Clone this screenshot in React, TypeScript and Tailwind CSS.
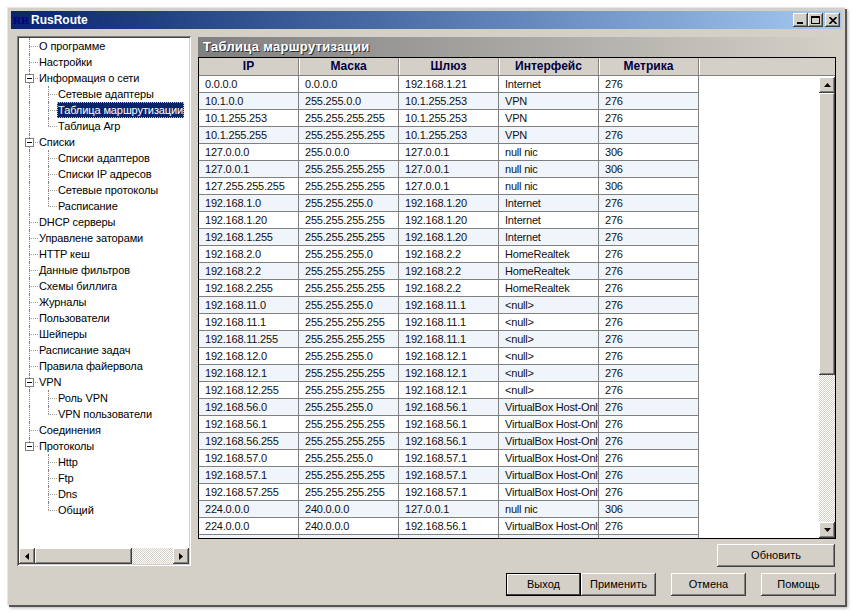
import React from 'react';

const FONT = "font-['Liberation_Sans',sans-serif]";
const RAISED = 'shadow-[inset_-1px_-1px_#404040,inset_1px_1px_#ffffff,inset_-2px_-2px_#808080]';
const DITHER = 'bg-[repeating-conic-gradient(#d4d0c8_0_25%,#ffffff_0_50%)] bg-size-[2px_2px]';

type TreeItem = { label: string; level: 0 | 1; box?: boolean; last?: boolean; endRoot?: boolean; selected?: boolean };

const tree: TreeItem[] = [
  { label: 'О программе', level: 0 },
  { label: 'Настройки', level: 0 },
  { label: 'Информация о сети', level: 0, box: true },
  { label: 'Сетевые адаптеры', level: 1 },
  { label: 'Таблица маршрутизации', level: 1, selected: true },
  { label: 'Таблица Arp', level: 1, last: true },
  { label: 'Списки', level: 0, box: true },
  { label: 'Списки адаптеров', level: 1 },
  { label: 'Списки IP адресов', level: 1 },
  { label: 'Сетевые протоколы', level: 1 },
  { label: 'Расписание', level: 1, last: true },
  { label: 'DHCP серверы', level: 0 },
  { label: 'Управлене заторами', level: 0 },
  { label: 'HTTP кеш', level: 0 },
  { label: 'Данные фильтров', level: 0 },
  { label: 'Схемы биллига', level: 0 },
  { label: 'Журналы', level: 0 },
  { label: 'Пользователи', level: 0 },
  { label: 'Шейперы', level: 0 },
  { label: 'Расписание задач', level: 0 },
  { label: 'Правила файервола', level: 0 },
  { label: 'VPN', level: 0, box: true },
  { label: 'Роль VPN', level: 1 },
  { label: 'VPN пользователи', level: 1, last: true },
  { label: 'Соединения', level: 0 },
  { label: 'Протоколы', level: 0, box: true, endRoot: true },
  { label: 'Http', level: 1 },
  { label: 'Ftp', level: 1 },
  { label: 'Dns', level: 1 },
  { label: 'Общий', level: 1, last: true },
];

const VBOX = 'VirtualBox Host-Only';
const M32 = '255.255.255.255';
const M24 = '255.255.255.0';

const routes: [string, string, string, string, string][] = [
  ['0.0.0.0', '0.0.0.0', '192.168.1.21', 'Internet', '276'],
  ['10.1.0.0', '255.255.0.0', '10.1.255.253', 'VPN', '276'],
  ['10.1.255.253', M32, '10.1.255.253', 'VPN', '276'],
  ['10.1.255.255', M32, '10.1.255.253', 'VPN', '276'],
  ['127.0.0.0', '255.0.0.0', '127.0.0.1', 'null nic', '306'],
  ['127.0.0.1', M32, '127.0.0.1', 'null nic', '306'],
  ['127.255.255.255', M32, '127.0.0.1', 'null nic', '306'],
  ['192.168.1.0', M24, '192.168.1.20', 'Internet', '276'],
  ['192.168.1.20', M32, '192.168.1.20', 'Internet', '276'],
  ['192.168.1.255', M32, '192.168.1.20', 'Internet', '276'],
  ['192.168.2.0', M24, '192.168.2.2', 'HomeRealtek', '276'],
  ['192.168.2.2', M32, '192.168.2.2', 'HomeRealtek', '276'],
  ['192.168.2.255', M32, '192.168.2.2', 'HomeRealtek', '276'],
  ['192.168.11.0', M24, '192.168.11.1', '<null>', '276'],
  ['192.168.11.1', M32, '192.168.11.1', '<null>', '276'],
  ['192.168.11.255', M32, '192.168.11.1', '<null>', '276'],
  ['192.168.12.0', M24, '192.168.12.1', '<null>', '276'],
  ['192.168.12.1', M32, '192.168.12.1', '<null>', '276'],
  ['192.168.12.255', M32, '192.168.12.1', '<null>', '276'],
  ['192.168.56.0', M24, '192.168.56.1', VBOX, '276'],
  ['192.168.56.1', M32, '192.168.56.1', VBOX, '276'],
  ['192.168.56.255', M32, '192.168.56.1', VBOX, '276'],
  ['192.168.57.0', M24, '192.168.57.1', VBOX, '276'],
  ['192.168.57.1', M32, '192.168.57.1', VBOX, '276'],
  ['192.168.57.255', M32, '192.168.57.1', VBOX, '276'],
  ['224.0.0.0', '240.0.0.0', '127.0.0.1', 'null nic', '306'],
  ['224.0.0.0', '240.0.0.0', '192.168.56.1', VBOX, '276'],
  ['', '', '', '', ''],
];

const headers = ['IP', 'Маска', 'Шлюз', 'Интерфейс', 'Метрика'];

const Arrow: React.FC<{ dir: 'up' | 'down' | 'left' | 'right' }> = ({ dir }) => {
  const points = {
    up: '0,4 7,4 3.5,0',
    down: '0,0 7,0 3.5,4',
    left: '4,0 4,7 0,3.5',
    right: '0,0 0,7 4,3.5',
  }[dir];
  const vertical = dir === 'up' || dir === 'down';
  return (
    <svg width={vertical ? 7 : 4} height={vertical ? 4 : 7} className="block">
      <polygon points={points} fill="#000" />
    </svg>
  );
};

const ScrollButton: React.FC<{ dir: 'up' | 'down' | 'left' | 'right' }> = ({ dir }) => (
  <div className={`w-4 h-4 shrink-0 bg-[#d4d0c8] flex items-center justify-center ${RAISED}`}>
    <Arrow dir={dir} />
  </div>
);

const Button: React.FC<{ label: string; width: string; isDefault?: boolean }> = ({ label, width, isDefault }) => (
  <div
    className={`${width} h-[23px] bg-[#d4d0c8] flex items-center justify-center text-[11px] text-black ${
      isDefault
        ? 'shadow-[inset_0_0_0_1px_#000,inset_-2px_-2px_#404040,inset_2px_2px_#ffffff]'
        : RAISED
    }`}
  >
    {label}
  </div>
);

const WindowControl: React.FC<{ children: React.ReactNode; className?: string }> = ({ children, className }) => (
  <div className={`w-[15px] h-[14px] bg-[#d4d0c8] flex items-center justify-center ${RAISED} ${className ?? ''}`}>
    {children}
  </div>
);

const TreeRow: React.FC<{ item: TreeItem; rootDone: boolean }> = ({ item, rootDone }) => {
  const dotV = 'absolute w-0 border-l border-dotted border-[#808080]';
  const dotH = 'absolute h-0 top-2 border-t border-dotted border-[#a0a0a0]';
  return (
    <div className={`relative h-4 flex items-center ${item.level === 0 ? 'pl-[19px]' : 'pl-[38px]'}`}>
      {!rootDone && <span className={`${dotV} left-[10px] top-0 ${item.endRoot ? 'h-2' : 'h-4'}`} />}
      {item.level === 0 ? (
        <span className={`${dotH} left-[10px] w-[9px]`} />
      ) : (
        <>
          <span className={`${dotV} left-[29px] top-0 ${item.last ? 'h-2' : 'h-4'}`} />
          <span className={`${dotH} left-[29px] w-[9px]`} />
        </>
      )}
      {item.box && (
        <span className="absolute left-[6px] top-[4px] w-[9px] h-[9px] bg-white border border-[#808080] flex items-center justify-center">
          <span className="w-[5px] h-px bg-black" />
        </span>
      )}
      <span
        className={`relative px-px leading-[16px] h-4 whitespace-nowrap text-[11px] tracking-[-0.1px] ${
          item.selected ? 'bg-[#0a246a] text-white outline-1 outline-dotted -outline-offset-1 outline-[#e0c060]' : 'text-black'
        }`}
      >
        {item.label}
      </span>
    </div>
  );
};

export default function App() {
  return (
    <div className={`w-[853px] h-[613px] bg-white overflow-hidden pt-[7px] pl-[7px] ${FONT}`}>
      <div className="w-[838px] h-[598px] bg-[#d4d0c8] pt-[3px] pl-[3px] pr-[3px] border-t border-l border-[#e8e6e0] shadow-[2px_2px_0_#555555,3px_3px_3px_#b0b0b0] flex flex-col">
        <div className="h-[18px] shrink-0 bg-linear-to-r from-[#0a246a] to-[#a6caf0] flex items-center pl-[2px] pr-[2px]">
          <span className="w-[16px] text-[11px] font-bold leading-none text-[#00008b] font-['Liberation_Serif',serif]">RR</span>
          <span className="ml-[2px] text-[12px] font-bold text-white">RusRoute</span>
          <div className="ml-auto flex items-center">
            <WindowControl>
              <span className="w-[6px] h-[2px] bg-black mt-[6px] -ml-[2px]" />
            </WindowControl>
            <WindowControl>
              <span className="w-[9px] h-[8px] border border-t-2 border-black" />
            </WindowControl>
            <WindowControl className="ml-[2px]">
              <svg width="8" height="7" viewBox="0 0 8 7" className="block">
                <path d="M0.5 0 L7.5 7 M7.5 0 L0.5 7" stroke="#000" strokeWidth="1.6" />
              </svg>
            </WindowControl>
          </div>
        </div>

        <div className="flex pl-[6px] pt-[7px] gap-[7px]">
          <div className="w-[174px] h-[530px] p-[2px] bg-white flex flex-col shadow-[inset_1px_1px_#808080,inset_-1px_-1px_#ffffff,inset_2px_2px_#404040,inset_-2px_-2px_#d4d0c8]">
            <div className="flex-1 overflow-hidden">
              {tree.map((item, i) => (
                <TreeRow key={i} item={item} rootDone={i > 25} />
              ))}
            </div>
            <div className={`h-4 flex ${DITHER}`}>
              <ScrollButton dir="left" />
              <div className={`w-[97px] bg-[#d4d0c8] ${RAISED}`} />
              <div className="flex-1" />
              <ScrollButton dir="right" />
            </div>
          </div>

          <div className="w-[638px] pt-px flex flex-col">
            <div className="h-[20px] bg-linear-to-r from-[#808080] to-[#d4d0c8] flex items-center pl-[5px] text-[13px] font-bold tracking-[0.3px] text-white [text-shadow:1px_1px_0_#303030]">
              Таблица маршрутизации
            </div>
            <div className="w-[638px] h-[482px] border border-black flex flex-col bg-white">
              <div className="h-[18px] shrink-0 flex bg-[#d4d0c8] border-b border-[#808080]">
                {headers.map((h) => (
                  <div
                    key={h}
                    className="w-[100px] border-r border-r-[#808080] text-center text-[12px] font-bold text-[#000040] leading-[17px] shadow-[1px_0_#ffffff]"
                  >
                    {h}
                  </div>
                ))}
              </div>
              <div className="flex-1 flex min-h-0">
                <div className="flex-1 overflow-hidden">
                  {routes.map((r, i) => (
                    <div key={i} className={`w-[500px] h-[17px] flex border-b border-[#808080] ${i % 2 ? 'bg-[#f0f5fc]' : 'bg-white'}`}>
                      {r.map((cell, j) => (
                        <div
                          key={j}
                          className="w-[100px] pl-[6px] border-r border-[#808080] overflow-hidden whitespace-nowrap text-[11px] leading-[16px] tracking-[-0.2px] text-[#101010]"
                        >
                          {cell}
                        </div>
                      ))}
                    </div>
                  ))}
                </div>
                <div className={`w-4 mt-px flex flex-col ${DITHER}`}>
                  <ScrollButton dir="up" />
                  <div className={`h-[282px] bg-[#d4d0c8] ${RAISED}`} />
                  <div className="flex-1" />
                  <ScrollButton dir="down" />
                </div>
              </div>
            </div>
            <div className="mt-[5px] pr-px flex justify-end">
              <Button label="Обновить" width="w-[118px]" />
            </div>
          </div>
        </div>

        <div className="mt-[6px] flex justify-end pr-[6px]">
          <Button label="Выход" width="w-[75px]" isDefault />
          <Button label="Применить" width="w-[75px]" />
          <div className="w-[15px]" />
          <Button label="Отмена" width="w-[75px]" />
          <div className="w-[15px]" />
          <Button label="Помощь" width="w-[75px]" />
        </div>
      </div>
    </div>
  );
}
